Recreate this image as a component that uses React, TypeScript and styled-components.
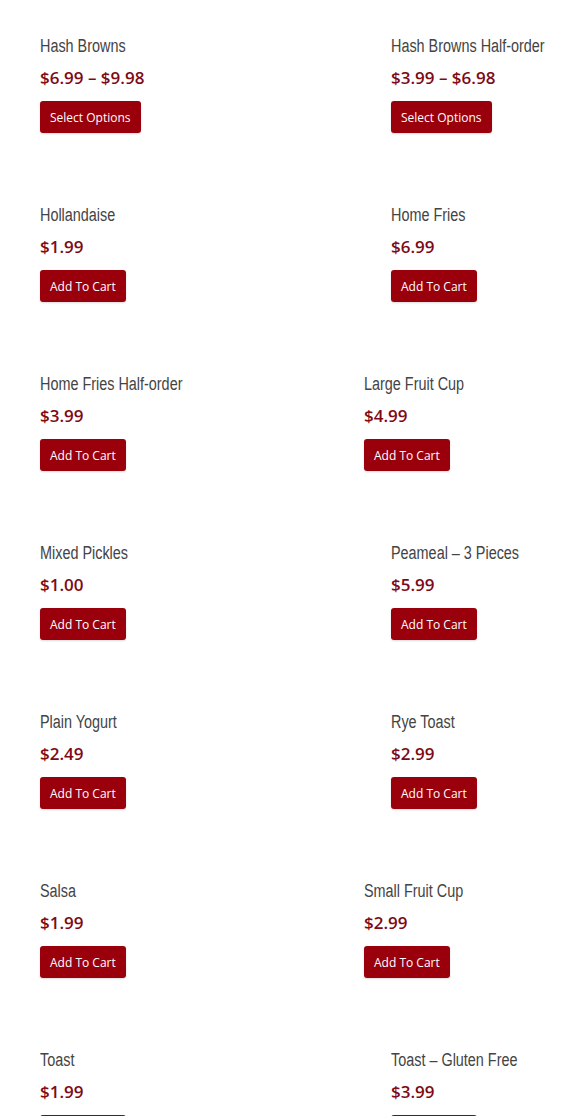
import styled, { createGlobalStyle } from 'styled-components';

type Product = {
  name: string;
  price: string;
  action: 'options' | 'cart';
  shift?: number;
};

const products: Product[] = [
  { name: 'Hash Browns', price: '$6.99 – $9.98', action: 'options' },
  { name: 'Hash Browns Half-order', price: '$3.99 – $6.98', action: 'options' },
  { name: 'Hollandaise', price: '$1.99', action: 'cart' },
  { name: 'Home Fries', price: '$6.99', action: 'cart' },
  { name: 'Home Fries Half-order', price: '$3.99', action: 'cart' },
  { name: 'Large Fruit Cup', price: '$4.99', action: 'cart', shift: 27 },
  { name: 'Mixed Pickles', price: '$1.00', action: 'cart' },
  { name: 'Peameal – 3 Pieces', price: '$5.99', action: 'cart' },
  { name: 'Plain Yogurt', price: '$2.49', action: 'cart' },
  { name: 'Rye Toast', price: '$2.99', action: 'cart' },
  { name: 'Salsa', price: '$1.99', action: 'cart' },
  { name: 'Small Fruit Cup', price: '$2.99', action: 'cart', shift: 27 },
  { name: 'Toast', price: '$1.99', action: 'cart' },
  { name: 'Toast – Gluten Free', price: '$3.99', action: 'cart' },
];

const GlobalStyle = createGlobalStyle`
  body {
    margin: 0;
    background: #fff;
    font-family: "Open Sans", "Liberation Sans", sans-serif;
  }
`;

export default function App() {
  return (
    <>
      <GlobalStyle />
      <Grid>
        {products.map((p) => (
          <Item key={p.name} $shift={p.shift ?? 0}>
            <Title>{p.name}</Title>
            <Price>{p.price}</Price>
            <Button>{p.action === 'options' ? 'Select Options' : 'Add To Cart'}</Button>
          </Item>
        ))}
      </Grid>
    </>
  );
}

const Grid = styled.div`
  display: grid;
  grid-template-columns: 351px 1fr;
  padding: 34px 0 0 40px;
  height: 1116px;
  box-sizing: border-box;
  overflow: hidden;
`;

const Item = styled.div<{ $shift: number }>`
  display: flex;
  flex-direction: column;
  align-items: flex-start;
  height: 169px;
  margin-left: ${(p) => -p.$shift}px;
`;

// condensed display face: no narrow family installed, so squeeze Liberation Sans
const Title = styled.h2`
  margin: 0;
  font-family: "Liberation Sans", Arial, sans-serif;
  font-weight: 400;
  font-size: 18px;
  line-height: 24px;
  color: #444;
  white-space: nowrap;
  transform: scaleX(0.8);
  transform-origin: left center;
`;

const Price = styled.div`
  margin-top: 8px;
  font-family: "Open Sans", sans-serif;
  font-weight: 600;
  font-size: 17px;
  line-height: 24px;
  color: #7e0a15;
`;

const Button = styled.button`
  margin-top: 11px;
  padding: 0 10px;
  height: 32px;
  border: none;
  border-radius: 3px;
  background: #9a000c;
  color: #fff;
  font-family: "Open Sans", sans-serif;
  font-size: 12px;
  cursor: pointer;
  box-shadow: 0 1px 2px rgba(0, 0, 0, 0.15);
`;
